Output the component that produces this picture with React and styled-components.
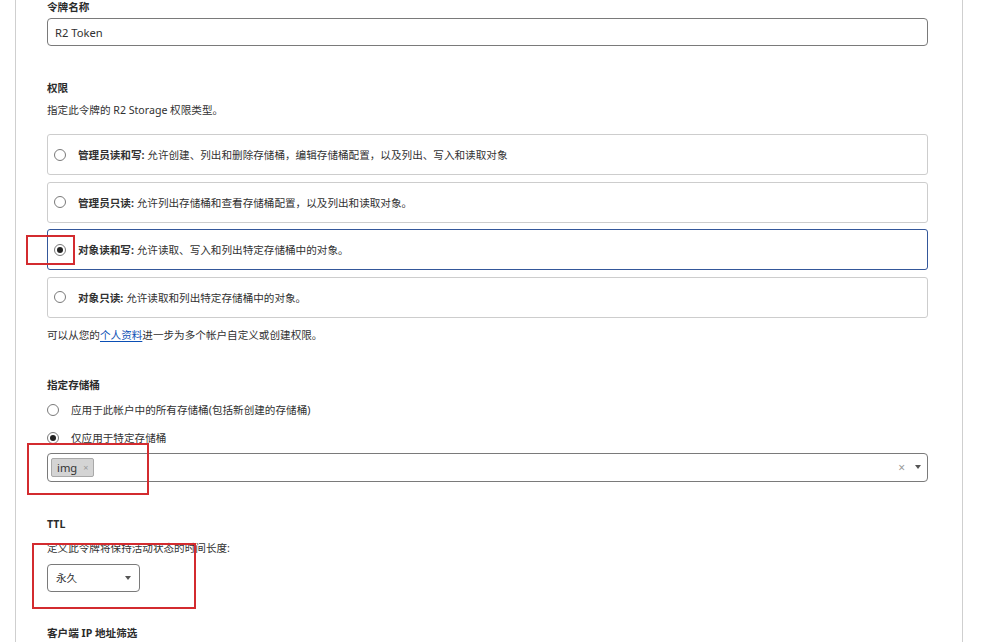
import React from "react";
import styled, { createGlobalStyle } from "styled-components";

const Global = createGlobalStyle`
  html, body { margin: 0; padding: 0; background: #fff; }
  body {
    font-family: "Segoe UI", "Noto Sans", "Noto Sans CJK SC", sans-serif;
    color: #313131;
    font-size: 10.6px;
  }
  * { box-sizing: border-box; }
`;

const Page = styled.div`
  margin-left: 15px;
  width: 948px;
  height: 642px;
  overflow: hidden;
  border-left: 1px solid #cfcfcf;
  border-right: 1px solid #cfcfcf;
  padding: 0 34px 0 31px;
`;

const Label = styled.div`
  font-weight: 700;
  line-height: 14px;
  margin-top: ${(p) => p.$mt || 0}px;
  color: #2b2b2b;
`;

const Text = styled.div`
  line-height: 14px;
  margin-top: ${(p) => p.$mt || 0}px;
`;

const TextInput = styled.div`
  margin-top: 4px;
  height: 28px;
  border: 1px solid #7a7a7a;
  border-radius: 4px;
  display: flex;
  align-items: center;
  padding-left: 7px;
  font-size: 11.2px;
`;

const CardList = styled.div`
  margin-top: 17px;
  display: flex;
  flex-direction: column;
  gap: 6.6px;
`;

const Card = styled.div`
  position: relative;
  height: 41px;
  border: 1px solid ${(p) => (p.$selected ? "#34579a" : "#cdcdcd")};
  border-radius: 3px;
  display: flex;
  align-items: center;
  padding-left: 6px;
  gap: 12px;
`;

const Radio = styled.span`
  width: 12px;
  height: 12px;
  border-radius: 50%;
  border: 1px solid #7a7a7a;
  background: #fff;
  display: inline-flex;
  align-items: center;
  justify-content: center;
  flex: none;
  &::after {
    content: "";
    width: 6px;
    height: 6px;
    border-radius: 50%;
    background: ${(p) => (p.$checked ? "#222" : "transparent")};
  }
`;

const Strong = styled.b`
  font-weight: 700;
`;

const Link = styled.a`
  color: #0b4fb5;
  text-decoration: underline;
  text-underline-offset: 2px;
`;

const RadioRow = styled.div`
  display: flex;
  align-items: center;
  gap: 12px;
  line-height: 14px;
  margin-top: ${(p) => p.$mt || 0}px;
`;

const Annot = styled.div`
  position: absolute;
  border: 2px solid #d32b2f;
  pointer-events: none;
  left: ${(p) => p.$l}px;
  top: ${(p) => p.$t}px;
  width: ${(p) => p.$w}px;
  height: ${(p) => p.$h}px;
`;

const MultiSelect = styled.div`
  position: relative;
  margin-top: 8px;
  height: 29px;
  border: 1px solid #7a7a7a;
  border-radius: 4px;
  display: flex;
  align-items: center;
  padding: 0 6px 0 3px;
`;

const Tag = styled.span`
  display: inline-flex;
  align-items: center;
  gap: 6px;
  height: 19px;
  padding: 0 5px 0 5px;
  background: #d4d4d4;
  border: 1px solid #a9a9a9;
  border-radius: 2px;
  font-size: 11.2px;
  color: #333;
`;

const TagX = styled.span`
  font-size: 9px;
  color: #999;
`;

const Spacer = styled.span`
  flex: 1;
`;

const ClearX = styled.span`
  font-size: 12px;
  color: #9a9a9a;
  margin-right: 10px;
`;

const Caret = styled.span`
  width: 0;
  height: 0;
  border-left: 3.5px solid transparent;
  border-right: 3.5px solid transparent;
  border-top: 4px solid #555;
`;

const Select = styled.div`
  position: relative;
  margin-top: 9px;
  width: 93px;
  height: 28px;
  border: 1px solid #7a7a7a;
  border-radius: 4px;
  display: flex;
  align-items: center;
  justify-content: space-between;
  padding: 0 8px 0 8px;
`;

const options = [
  { t: "管理员读和写:", d: "允许创建、列出和删除存储桶，编辑存储桶配置，以及列出、写入和读取对象" },
  { t: "管理员只读:", d: "允许列出存储桶和查看存储桶配置，以及列出和读取对象。" },
  { t: "对象读和写:", d: "允许读取、写入和列出特定存储桶中的对象。", sel: true },
  { t: "对象只读:", d: "允许读取和列出特定存储桶中的对象。" },
];

export default function App() {
  return (
    <>
      <Global />
      <Page>
        <Label>令牌名称</Label>
        <TextInput>R2 Token</TextInput>

        <Label $mt={35}>权限</Label>
        <Text $mt={8}>指定此令牌的 R2 Storage 权限类型。</Text>
        <CardList>
          {options.map((o) => (
            <Card key={o.t} $selected={o.sel}>
              <Radio $checked={o.sel} />
              <span>
                <Strong>{o.t}</Strong> {o.d}
              </span>
              {o.sel && <Annot $l={-22} $t={5} $w={49} $h={30} />}
            </Card>
          ))}
        </CardList>
        <Text $mt={10}>
          可以从您的<Link>个人资料</Link>进一步为多个帐户自定义或创建权限。
        </Text>

        <Label $mt={36}>指定存储桶</Label>
        <RadioRow $mt={11}>
          <Radio />
          <span>应用于此帐户中的所有存储桶(包括新创建的存储桶)</span>
        </RadioRow>
        <RadioRow $mt={14}>
          <Radio $checked />
          <span>仅应用于特定存储桶</span>
        </RadioRow>
        <MultiSelect>
          <Tag>
            img <TagX>×</TagX>
          </Tag>
          <Spacer />
          <ClearX>×</ClearX>
          <Caret />
          <Annot $l={-21} $t={-11} $w={122} $h={52} />
        </MultiSelect>

        <Label $mt={35}>TTL</Label>
        <Text $mt={10}>定义此令牌将保持活动状态的时间长度:</Text>
        <Select>
          <span>永久</span>
          <Caret />
          <Annot $l={-16} $t={-22} $w={164} $h={66} />
        </Select>

        <Label $mt={34}>客户端 IP 地址筛选</Label>
      </Page>
    </>
  );
}
